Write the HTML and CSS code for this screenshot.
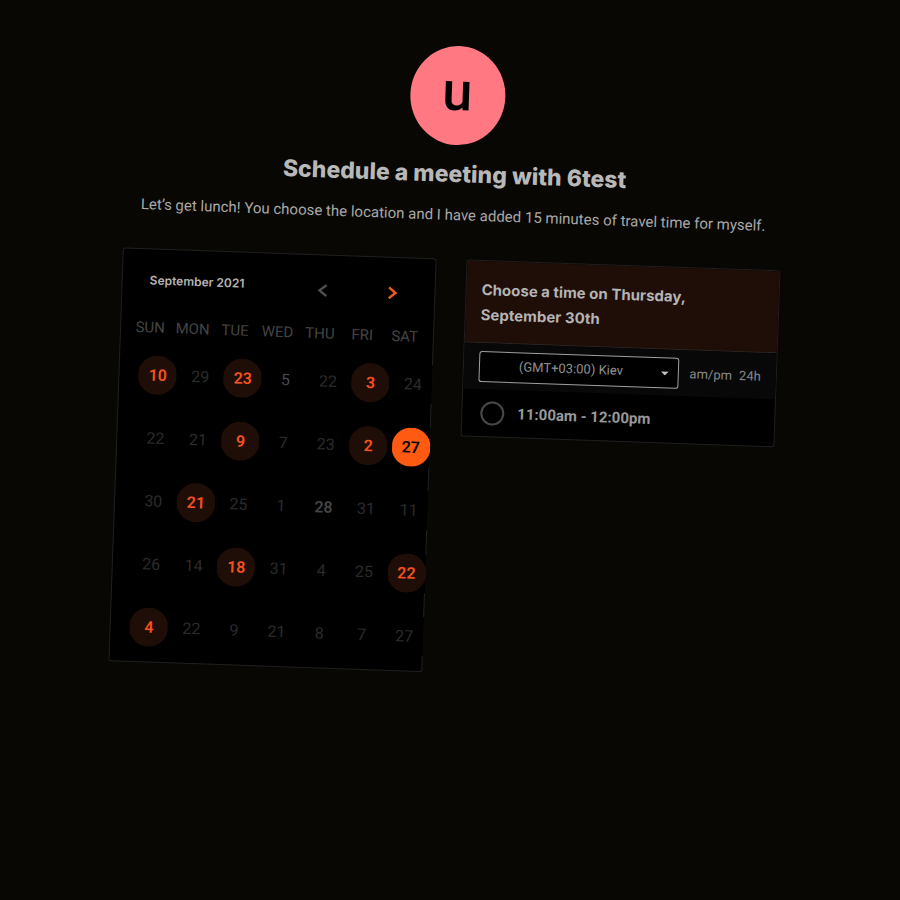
FILE: index.html
```
<!DOCTYPE html>
<html lang="en">
<head>
<meta charset="utf-8">
<meta name="viewport" content="width=device-width, initial-scale=1">
<title>Schedule a meeting</title>
<link rel="stylesheet" href="styles.css">
</head>
<body>
<main class="page">
  <header class="intro">
    <div class="avatar">u</div>
    <h1>Schedule a meeting with 6test</h1>
    <p>Let’s get lunch! You choose the location and I have added 15 minutes of travel time for myself.</p>
  </header>
  <div class="panels">
    <section class="card calendar">
      <div class="month">
        <h2>September 2021</h2>
        <button class="nav" aria-label="Previous month"><svg viewBox="0 0 12 14"><path d="M10 1.500 3 7l7 5.500"/></svg></button>
        <button class="nav next" aria-label="Next month"><svg viewBox="0 0 12 14"><path d="M2.500 1.500 9 7l-6.500 5.500"/></svg></button>
      </div>
      <div class="weekdays"><span>SUN</span><span>MON</span><span>TUE</span><span>WED</span><span>THU</span><span>FRI</span><span>SAT</span></div>
      <div class="days">
        <button class="open">10</button><button>29</button><button class="open">23</button><button class="near">5</button><button>22</button><button class="open">3</button><button>24</button>
        <button>22</button><button>21</button><button class="open">9</button><button>7</button><button>23</button><button class="open">2</button><button class="open chosen">27</button>
        <button>30</button><button class="open">21</button><button>25</button><button>1</button><button class="today">28</button><button>31</button><button>11</button>
        <button>26</button><button>14</button><button class="open">18</button><button>31</button><button>4</button><button>25</button><button class="open">22</button>
        <button class="open">4</button><button>22</button><button>9</button><button>21</button><button>8</button><button>7</button><button>27</button>
      </div>
    </section>
    <section class="card times">
      <h2>Choose a time on Thursday, September 30th</h2>
      <div class="zone">
        <div class="picker">
          <select aria-label="Time zone"><option>(GMT+03:00) Kiev</option></select>
          <svg viewBox="0 0 8 4"><path d="M0 0h8L4 4z"/></svg>
        </div>
        <div class="formats"><button>am/pm</button><button>24h</button></div>
      </div>
      <label class="slot"><input type="radio" name="slot"><span>11:00am - 12:00pm</span></label>
    </section>
  </div>
</main>
</body>
</html>
```
FILE: styles.css
```
* { box-sizing: border-box; }
html { background: #080703; }
body {
  margin: 0;
  overflow: hidden;
  background: #080703;
  color: #b4b4b4;
  font-family: Roboto, "Liberation Sans", sans-serif;
}
h1, h2, p { margin: 0; }
button {
  padding: 0;
  border: 0;
  background: none;
  color: inherit;
  font: inherit;
}
.page {
  min-height: 100vh;
  padding: 46px 10px 0 0;
  transform: rotate(2deg);
}
.intro {
  display: flex;
  flex-direction: column;
  align-items: center;
  text-align: center;
}
.avatar {
  display: grid;
  place-items: center;
  width: 95px;
  height: 99px;
  padding-bottom: 8px;
  border-radius: 50%;
  background: #ff7882;
  color: #000;
  font-size: 54px;
  font-weight: 500;
  line-height: 60px;
}
h1 {
  margin-top: 13px;
  color: #b8b8b8;
  font: 800 23px/32px Inter, sans-serif;
}
.intro p {
  margin-top: 13px;
  color: #a8a8a8;
  font-size: 15px;
  font-weight: 400;
  line-height: 24px;
}
.panels {
  display: flex;
  align-items: flex-start;
  gap: 30px;
  max-width: 658px;
  margin: 32px auto 0;
}
.card {
  flex: 1;
  min-width: 0;
  border: 1px solid #202020;
  border-radius: 3px;
  background: #000;
}
.calendar { padding: 20px 0 15px; }
.month {
  display: flex;
  align-items: center;
  padding: 0 27px;
  height: 30px;
}
.month h2 {
  flex: 1;
  padding-bottom: 8px;
  font: 600 12px/20px Inter, sans-serif;
}
.nav {
  display: grid;
  place-items: center;
  width: 30px;
  height: 30px;
  margin-left: 40px;
  color: #505050;
}
.nav.next { color: #f05a1e; }
.nav svg {
  width: 12px;
  height: 14px;
  fill: none;
  stroke: currentColor;
  stroke-width: 2.4;
}
.weekdays {
  display: grid;
  grid-template-columns: repeat(7, 1fr);
  margin: 16px 7px 0 8px;
  color: #444;
  font-size: 15px;
  line-height: 24px;
  text-align: center;
}
.days {
  display: grid;
  grid-template-columns: repeat(7, 1fr);
  justify-items: center;
  row-gap: 24px;
  margin: 16px -3px 0 17px;
}
.days button {
  width: 38px;
  height: 39px;
  background: #000;
  color: #2b2b2b;
  font-size: 16px;
}
.days .near { color: #4a4a4a; }
.days .today { color: #444; font-weight: 600; }
.days .open {
  background: radial-gradient(circle, #1f0d07 19px, #000 20px);
  color: #f4511e;
  font-weight: 600;
}
.days .chosen {
  background: radial-gradient(circle, #ff5a12 19px, #000 20px);
  color: #000;
}
.times h2 {
  padding: 16px 40px 15px 15px;
  border-bottom: 1px solid #2b2523;
  background: #1f0d07;
  font: 700 15px/25px Inter, sans-serif;
}
.zone {
  display: flex;
  align-items: center;
  justify-content: space-between;
  height: 46px;
  padding: 0 15px;
  background: #080808;
}
.picker { position: relative; width: 200px; }
select {
  display: block;
  width: 100%;
  height: 31px;
  padding: 0 34px 0 18px;
  border: 1px solid #a0a0a0;
  border-radius: 3px;
  background: #000;
  color: #909090;
  font: 400 13px/20px Roboto, sans-serif;
  text-align: center;
  text-align-last: center;
  appearance: none;
}
.picker svg {
  position: absolute;
  top: 14px;
  right: 10px;
  width: 8px;
  height: 4px;
  fill: #c0c0c0;
  pointer-events: none;
}
.formats {
  display: flex;
  gap: 7px;
  color: #888;
  font-size: 13px;
}
.slot {
  display: flex;
  align-items: center;
  gap: 13px;
  height: 47px;
  padding: 0 18px;
  color: #999;
  font-size: 15px;
  font-weight: 700;
}
.slot input {
  width: 24px;
  height: 24px;
  margin: 0;
  border: 2px solid #484848;
  border-radius: 50%;
  appearance: none;
}
```
